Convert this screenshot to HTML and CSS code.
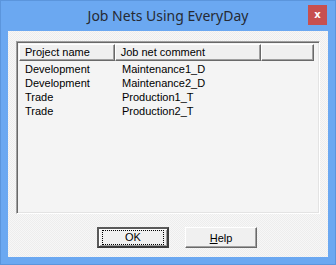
FILE: index.html
```html
<!DOCTYPE html>
<html lang="en">
<head>
    <meta charset="UTF-8">
    <title>Job Nets Using EveryDay</title>
    <link rel="stylesheet" href="styles.css">
</head>
<body>
    <div class="window">
        <div class="titlebar">
            <span></span>
            <h1 class="title">Job Nets Using EveryDay</h1>
            <button type="button" class="close">x</button>
        </div>

        <div class="client">
            <div class="list">
                <div class="list-head">
                    <div class="col col-project">Project name</div>
                    <div class="col col-comment">Job net comment</div>
                    <div class="col col-rest"></div>
                </div>
                <div class="list-body">
                    <div class="row"><span class="col-project">Development</span><span>Maintenance1_D</span></div>
                    <div class="row"><span class="col-project">Development</span><span>Maintenance2_D</span></div>
                    <div class="row"><span class="col-project">Trade</span><span>Production1_T</span></div>
                    <div class="row"><span class="col-project">Trade</span><span>Production2_T</span></div>
                </div>
            </div>

            <div class="btn-wrapper">
                <button type="button" class="btn default"><span class="focus">OK</span></button>
                <button type="button" class="btn"><span><u>H</u>elp</span></button>
            </div>
        </div>
    </div>
</body>
</html>
```

FILE: styles.css
```css
body {
    margin: 0;
}
.window {
    width: 336px;
    height: 265px;
    box-sizing: border-box;
    background: #6ba8f1;
    border: 1px solid #5b95dc;
    display: flex;
    flex-direction: column;
}
.titlebar {
    height: 30px;
    display: grid;
    grid-template-columns: 1fr auto 1fr;
    align-items: start;
}
.title {
    margin: 0;
    padding-top: 4px;
    font-family: "Noto Sans", sans-serif;
    font-size: 14px;
    font-weight: 400;
    line-height: 21px;
    color: #262a33;
}
.close {
    justify-self: end;
    margin: 4px 8px 0 0;
    width: 19px;
    height: 20px;
    padding: 0;
    border: 0;
    background: #c75050;
    color: #fff;
    font-family: "DejaVu Sans", sans-serif;
    font-size: 10px;
    font-weight: 700;
    line-height: 18px;
}
.client {
    flex: 1;
    margin: 0 7px 7px;
    padding: 10px 8px 0;
    background: repeating-conic-gradient(#ededed 0 25%, #f7f7f7 0 50%) 0 0 / 2px 2px;
    font-family: "Liberation Sans", Arial, sans-serif;
    font-size: 11px;
    color: #000;
}
.list {
    height: 173px;
    box-sizing: border-box;
    background: #f4f4f4;
    border: 1px solid;
    border-color: #a0a0a0 #ffffff #ffffff #a0a0a0;
    box-shadow: inset 1px 1px 0 #696969, inset -1px -1px 0 #e3e3e3;
    padding: 2px;
}
.list-head {
    display: flex;
    height: 17px;
    margin-right: 3px;
}
.col {
    box-sizing: border-box;
    background: #f0f0f0;
    border: 1px solid;
    border-color: #ffffff #696969 #696969 #ffffff;
    box-shadow: inset -1px -1px 0 #a0a0a0;
    padding: 1px 0 0 5px;
    line-height: 13px;
}
.col-project {
    width: 96px;
}
.col-comment {
    width: 147px;
}
.col-rest {
    width: 53px;
}
.list-body {
    padding-top: 1px;
}
.row {
    display: flex;
    height: 14px;
    line-height: 14px;
    padding-left: 6px;
}
.row .col-project {
    width: 97px;
}
.btn-wrapper {
    display: flex;
    gap: 16px;
    padding: 13px 0 0 81px;
}
.btn {
    width: 72px;
    height: 21px;
    box-sizing: border-box;
    padding: 0;
    background: #f0f0f0;
    border: 1px solid;
    border-color: #ffffff #696969 #696969 #ffffff;
    box-shadow: inset -1px -1px 0 #a0a0a0;
    font-family: "Liberation Sans", Arial, sans-serif;
    font-size: 11px;
    color: #000;
    display: flex;
    align-items: center;
    justify-content: center;
}
.btn.default {
    border: 2px solid;
    border-color: #5a5a5a #3c3c3c #3c3c3c #5a5a5a;
    box-shadow: inset 1px 1px 0 #ffffff, inset -1px -1px 0 #a0a0a0;
}
.focus {
    display: block;
    width: 60px;
    height: 13px;
    line-height: 13px;
    border: 1px dotted #000;
}
```
